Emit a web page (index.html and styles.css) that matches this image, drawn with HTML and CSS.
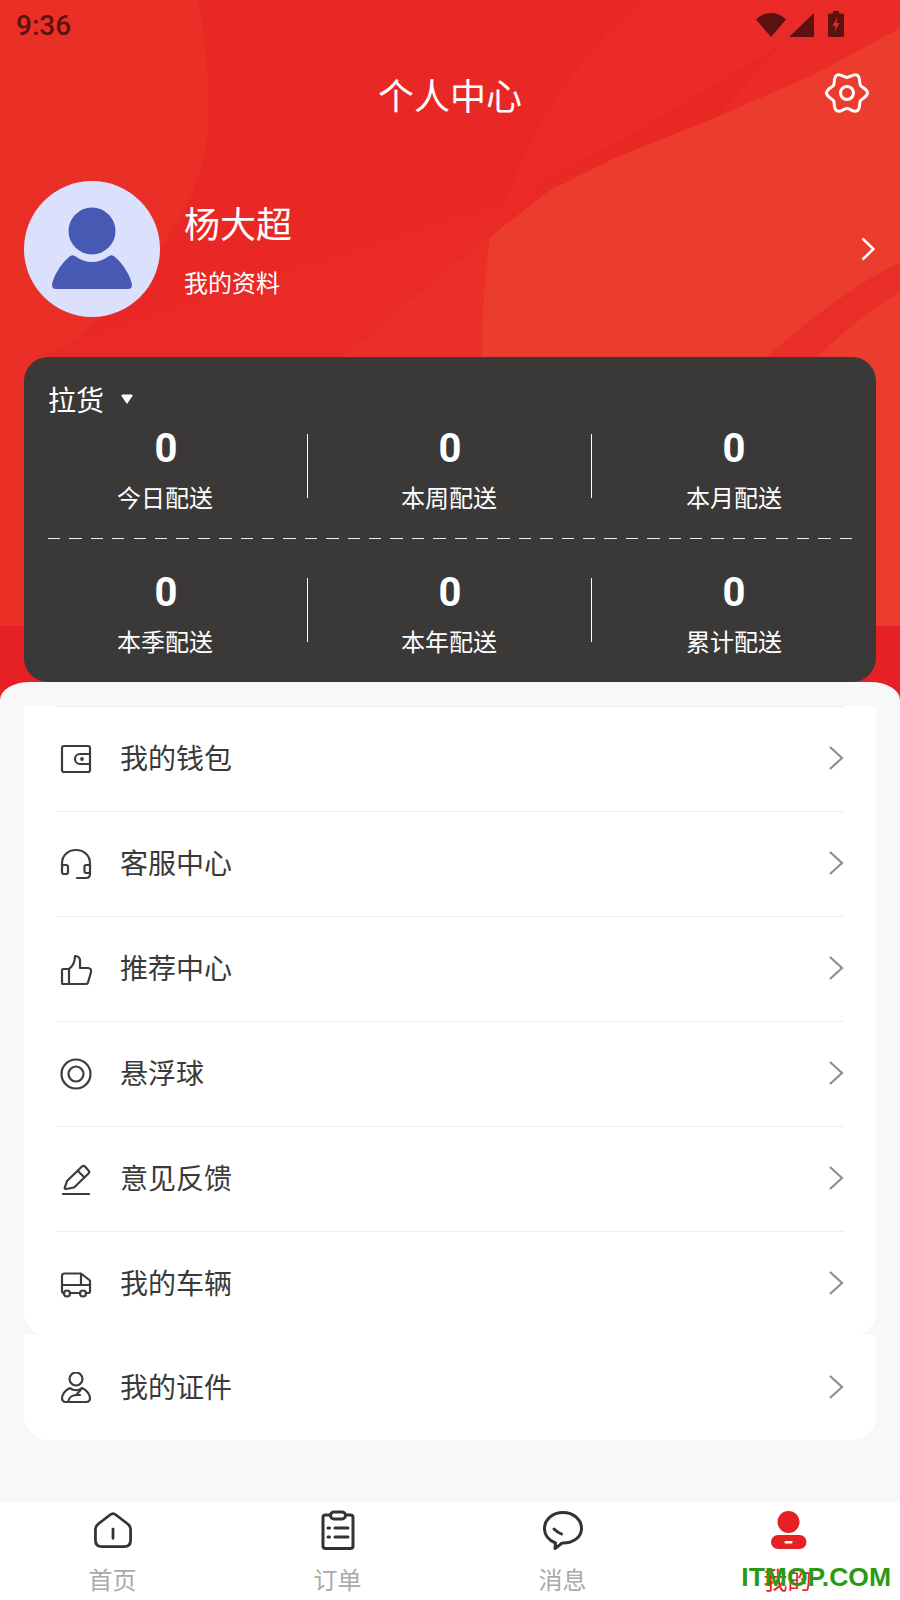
FILE: index.html
```html
<!DOCTYPE html>
<html lang="zh-CN"><head>
<meta charset="utf-8">
<title>个人中心</title>
<link rel="stylesheet" href="styles.css">
</head>
<body>
<div class="page">
    <div class="hero">
        <!-- background artwork of the header -->
        <svg class="hero-bg" viewBox="0 0 900 626">
            <rect width="900" height="626" fill="#e92825"></rect>
            <path d="M0 0H198C212 80 212 130 200 170C180 240 120 300 60 357L30 626H0Z" fill="#ea2f27"></path>
            <path d="M647 0C600 30 560 90 537 130C520 165 505 200 490 237V357H900V0Z" fill="#ea2b27"></path>
            <path d="M783 43L633 133L500 205L490 237L617 157L717 117Z" fill="#e92826"></path>
            <path d="M35 357C150 310 320 260 500 203L617 157V357Z" fill="#ea2a26"></path>
            <path d="M343 357L450 267L490 237V357Z" fill="#ea2e28"></path>
            <path d="M900 28L817 73L717 117L617 157L550 190L490 237C484 280 482 320 482 357V626H900Z" fill="#eb3c2e"></path>
            <path d="M900 262C855 285 810 318 767 357L790 372H805L817 357C845 330 872 308 900 292Z" fill="#e92d28"></path>
        </svg>

        <div class="status-bar">
            <span class="time">9:36</span>
            <div class="status-icons">
                <svg width="30" height="24" viewBox="0 0 30 24"><path d="M0 6.500C4 2.500 9 0 15 0s11 2.500 15 6.500L15 24Z" fill="#5c1210"></path></svg>
                <svg width="25" height="24" viewBox="0 0 25 24"><path d="M25 0V24H0Z" fill="#5c1210"></path></svg>
                <svg width="16" height="26" viewBox="0 0 16 26"><path d="M5 0h6v2.500h3.500a1.500 1.500 0 0 1 1.500 1.500v20.500a1.500 1.500 0 0 1-1.500 1.500h-13A1.500 1.500 0 0 1 0 24.500V4a1.500 1.500 0 0 1 1.500-1.500H5Z" fill="#5c1210"></path><path d="M9.500 6L4.500 15h3L6.500 21l5-9h-3Z" fill="#e92726"></path></svg>
            </div>
        </div>

        <div class="nav">
            <h1 class="nav-title">个人中心</h1>
            <svg class="gear" width="42" height="42" viewBox="0 0 42 42" fill="none" stroke="#fff" stroke-width="3">
                <path d="M41.500 21C41.500 25 35.920 26.150 34.420 28.750C32.920 31.350 34.710 36.750 31.250 38.750C27.790 40.750 24 36.500 21 36.500C18 36.500 14.210 40.750 10.750 38.750C7.290 36.750 9.080 31.350 7.580 28.750C6.080 26.150 0.500 25 0.500 21C0.500 17 6.080 15.850 7.580 13.250C9.080 10.650 7.290 5.250 10.750 3.250C14.210 1.250 18 5.500 21 5.500C24 5.500 27.790 1.250 31.250 3.250C34.710 5.250 32.920 10.650 34.420 13.250C35.920 15.850 41.500 17 41.500 21Z"></path>
                <circle cx="21" cy="21" r="6.500"></circle>
            </svg>
        </div>

        <div class="profile">
            <div class="avatar">
                <svg width="136" height="136" viewBox="0 0 136 136">
                    <circle cx="68" cy="50" r="23.500" fill="#4759b3"></circle>
                    <path d="M44 77Q47 73 51 75Q59 81 68 81Q77 81 85 75Q89 73 92 77C100 84 107 96 108 104Q108 108 104 108H32Q28 108 28 104C29 96 36 84 44 77Z" fill="#4759b3"></path>
                </svg>
            </div>
            <div class="profile-text">
                <div class="profile-name">杨大超</div>
                <div class="profile-sub">我的资料</div>
            </div>
            <svg class="profile-arrow" width="14" height="24" viewBox="0 0 14 24" fill="none" stroke="#fff" stroke-width="2.500"><path d="M1.500 1.500L12.500 12L1.500 22.500"></path></svg>
        </div>

        <div class="stats-card">
            <div class="stats-head">
                <span>拉货</span>
                <svg width="12" height="10" viewBox="0 0 12 10"><path d="M1.500 0.500H10.500Q12 0.500 11.500 2L6 10L0.500 2Q0 0.500 1.500 0.500Z" fill="#fff"></path></svg>
            </div>
            <div class="stats-row">
                <div class="stat"><div class="stat-value">0</div><div class="stat-label">今日配送</div></div>
                <div class="stat"><div class="stat-value">0</div><div class="stat-label">本周配送</div></div>
                <div class="stat"><div class="stat-value">0</div><div class="stat-label">本月配送</div></div>
            </div>
            <div class="stats-dash"></div>
            <div class="stats-row">
                <div class="stat"><div class="stat-value">0</div><div class="stat-label">本季配送</div></div>
                <div class="stat"><div class="stat-value">0</div><div class="stat-label">本年配送</div></div>
                <div class="stat"><div class="stat-value">0</div><div class="stat-label">累计配送</div></div>
            </div>
        </div>
    </div>

    <div class="sheet">
        <div class="menu-card">
            <div class="menu-row">
                <svg class="menu-icon" viewBox="0 0 32 32"><rect x="2" y="3" width="28" height="26" rx="2"></rect><path d="M30 11H20a5 5 0 0 0 0 10H30"></path><circle cx="22" cy="16" r="0.800"></circle></svg>
                <span class="menu-text">我的钱包</span>
                <svg class="menu-arrow" width="16" height="26" viewBox="0 0 16 26"><path d="M2 2L14 13L2 24"></path></svg>
            </div>
            <div class="menu-row">
                <svg class="menu-icon" viewBox="0 0 32 32"><path d="M2 18V15.500C2 7.500 8 2 16 2s14 5.500 14 13.500V18"></path><rect x="2" y="17" width="6" height="9" rx="2"></rect><path d="M30 17H26a1.500 1.500 0 0 0-1.500 1.500v5a1.500 1.500 0 0 0 1.500 1.500h4M30 17V26q0 4-4 4H17"></path></svg>
                <span class="menu-text">客服中心</span>
                <svg class="menu-arrow" width="16" height="26" viewBox="0 0 16 26"><path d="M2 2L14 13L2 24"></path></svg>
            </div>
            <div class="menu-row">
                <svg class="menu-icon" viewBox="0 0 32 32"><path d="M9 16H3a1 1 0 0 0-1 1V30a1 1 0 0 0 1 1H26a2 2 0 0 0 2-1.500L31 19a3 3 0 0 0-3-4H20V8a4.500 4.500 0 0 0-4.500-5L15 3C15 9 13 13 9 16ZM9 16V31"></path></svg>
                <span class="menu-text">推荐中心</span>
                <svg class="menu-arrow" width="16" height="26" viewBox="0 0 16 26"><path d="M2 2L14 13L2 24"></path></svg>
            </div>
            <div class="menu-row">
                <svg class="menu-icon" viewBox="0 0 32 32"><circle cx="16" cy="16" r="14.500"></circle><circle cx="16" cy="16" r="7.500"></circle></svg>
                <span class="menu-text">悬浮球</span>
                <svg class="menu-arrow" width="16" height="26" viewBox="0 0 16 26"><path d="M2 2L14 13L2 24"></path></svg>
            </div>
            <div class="menu-row">
                <svg class="menu-icon" viewBox="0 0 32 32"><path d="M6 26C4.500 26 4.500 25 5 24L7 18L22 3.500Q23.500 2 25 3.500L28.500 7.500Q30 9 28.500 10.500L14 24.500Z"></path><path d="M18 8L24.500 14.500"></path><path d="M3 31H29"></path></svg>
                <span class="menu-text">意见反馈</span>
                <svg class="menu-arrow" width="16" height="26" viewBox="0 0 16 26"><path d="M2 2L14 13L2 24"></path></svg>
            </div>
            <div class="menu-row">
                <svg class="menu-icon" viewBox="0 0 32 32"><path d="M4 25H3.500Q2 25 2 23V8Q2 5.500 4.500 5.500H21L30 12.500V23Q30 25 28.500 25H26.500M20 25H10M21 5.500V17M2 17H30"></path><circle cx="7" cy="25.500" r="3"></circle><circle cx="23" cy="25.500" r="3"></circle></svg>
                <span class="menu-text">我的车辆</span>
                <svg class="menu-arrow" width="16" height="26" viewBox="0 0 16 26"><path d="M2 2L14 13L2 24"></path></svg>
            </div>
        </div>
        <div class="menu-card menu-card-last">
            <div class="menu-row menu-row-plain">
                <svg class="menu-icon" viewBox="0 0 32 32"><circle cx="16" cy="7" r="6.500"></circle><path d="M10 16C5 18 2 23 2 26C2 29 4 30 6 30H26C28 30 30 29 30 26C30 23 27 18 22 16C19 19 13 19 10 16Z"></path><path d="M8 30C9 25 13 23 16 23H20M16 23C18 21 20 19 21 17"></path></svg>
                <span class="menu-text">我的证件</span>
                <svg class="menu-arrow" width="16" height="26" viewBox="0 0 16 26"><path d="M2 2L14 13L2 24"></path></svg>
            </div>
        </div>
    </div>

    <div class="tabbar">
        <div class="tab">
            <svg class="tab-icon" width="40" height="40" viewBox="0 0 40 40"><path d="M17 3.500Q20 1 23 3.500L36 13.500Q39 16 39 19V31Q39 38 32 38H8Q1 38 1 31V19Q1 16 4 13.500ZM20 19V29" transform="translate(1.500 1.500) scale(0.925)"></path></svg>
            <span class="tab-label">首页</span>
        </div>
        <div class="tab">
            <svg class="tab-icon" width="40" height="40" viewBox="0 0 40 40"><path d="M12 5H7.500Q5 5 5 7.500V36Q5 38.500 7.500 38.500H32.500Q35 38.500 35 36V7.500Q35 5 32.500 5H28"></path><rect x="12.500" y="2" width="15" height="7" rx="3.500"></rect><path d="M17 18H30M17 27H30M10 18H11.500M10 27H11.500"></path></svg>
            <span class="tab-label">订单</span>
        </div>
        <div class="tab">
            <svg class="tab-icon" width="40" height="40" viewBox="0 0 40 40"><path d="M12 38.500L12.500 33C6 30.500 1.500 25 1.500 18.500C1.500 9.500 9.500 2.500 20 2.500S38.500 9.500 38.500 18.500S30 33 20 33C18 33 17 35 12 38.500Z"></path><path d="M11 19Q14 22 18.500 24"></path></svg>
            <span class="tab-label">消息</span>
        </div>
        <div class="tab tab-active">
            <svg width="40" height="40" viewBox="0 0 40 40"><circle cx="20.500" cy="12" r="11" fill="#e62125"></circle><rect x="3" y="25" width="35.500" height="14" rx="7" fill="#e62125"></rect><rect x="16.500" y="31" width="8" height="2.500" rx="1" fill="#fff"></rect></svg>
            <span class="tab-label">我的</span>
        </div>
    </div>

    <div class="watermark">ITMOP.COM</div>
</div>
</body>
</html>
```

FILE: styles.css
```css
* {
    box-sizing: border-box;
}

body {
    margin: 0;
    background: #fff;
    font-family: "Noto Sans CJK SC", Roboto, sans-serif;
}

.page {
    position: relative;
    width: 900px;
    height: 1600px;
    display: flex;
    flex-direction: column;
    overflow: hidden;
}

/* header */
.hero {
    position: relative;
    height: 700px;
    flex-shrink: 0;
    background: #e62125;
}

.hero-bg {
    position: absolute;
    top: 0;
    left: 0;
    width: 900px;
    height: 626px;
}

.status-bar,
.nav,
.profile,
.stats-card {
    position: relative;
}

.status-bar {
    height: 50px;
    padding: 0 56px 0 16px;
    display: flex;
    align-items: center;
    justify-content: space-between;
}

.time {
    font-family: Roboto, sans-serif;
    font-size: 28px;
    font-weight: 500;
    color: #5c1210;
}

.status-icons {
    display: flex;
    align-items: center;
    gap: 3px;
}

.status-icons svg:last-child {
    margin-left: 11px;
    margin-top: -2px;
}

.nav {
    height: 94px;
    padding-bottom: 6px;
    display: flex;
    align-items: center;
    justify-content: center;
}

.nav-title {
    margin: 0;
    font-size: 36px;
    font-weight: 400;
    color: #fff;
}

.gear {
    position: absolute;
    right: 32px;
    top: 22px;
    overflow: visible;
}

.profile {
    margin-top: 37px;
    padding: 0 25px 0 24px;
    display: flex;
    align-items: center;
}

.avatar {
    width: 136px;
    height: 136px;
    border-radius: 50%;
    background: #dbe1fc;
}

.avatar svg {
    display: block;
}

.profile-text {
    flex: 1;
    margin-left: 24px;
    padding-bottom: 2px;
    color: #fff;
}

.profile-name {
    font-size: 36px;
    line-height: 50px;
}

.profile-sub {
    margin-top: 18px;
    font-size: 24px;
    line-height: 34px;
}

/* dark statistics card */
.stats-card {
    margin: 40px 24px 0;
    height: 325px;
    padding-top: 28px;
    border-radius: 24px;
    background: #3a3938;
    color: #fff;
}

.stats-head {
    height: 28px;
    padding-left: 24px;
    display: flex;
    align-items: center;
    gap: 17px;
    font-size: 28px;
    margin-bottom: 14px;
}

.stats-row {
    display: grid;
    grid-template-columns: repeat(3, 1fr);
}

.stat {
    position: relative;
    height: 87px;
    padding-right: 2px;
    text-align: center;
}

.stat:last-child {
    padding-right: 0;
}

.stat:not(:last-child) .stat-value {
    margin-left: 2px;
}

.stat:not(:last-child)::after {
    content: "";
    position: absolute;
    top: 7px;
    right: 0;
    width: 1px;
    height: 64px;
    background: #fff;
}

.stat-value {
    font-family: Roboto, sans-serif;
    font-size: 40px;
    font-weight: 700;
    line-height: 44px;
}

.stat-label {
    margin-top: 11px;
    font-size: 24px;
    line-height: 30px;
}

.stats-dash {
    height: 1px;
    margin: 24px 24px 32px;
    background: repeating-linear-gradient(90deg, #eee 0, #eee 12.300px, transparent 12.300px, transparent 21.400px);
}

/* menu */
.sheet {
    flex: 1;
    margin-top: -18px;
    position: relative;
    padding-top: 24px;
    background: #f7f8fa;
    border-radius: 30px 30px 0 0 / 18px 18px 0 0;
}

.menu-card {
    margin: 0 24px;
    background: #fff;
    border-radius: 0 0 24px 24px;
    overflow: hidden;
}

.menu-card-last {
    margin-top: -1px;
}

.menu-row {
    position: relative;
    height: 105px;
    padding: 0 32px 0 36px;
    display: flex;
    align-items: center;
}

.menu-row::before {
    content: "";
    position: absolute;
    top: 0;
    left: 32px;
    right: 32px;
    height: 1px;
    background: #eee;
}

.menu-row-plain::before {
    display: none;
}

.menu-icon {
    width: 32px;
    height: 32px;
    margin-top: 1px;
    fill: none;
    stroke: #3c3c3c;
    stroke-width: 2.200;
    stroke-linejoin: round;
    stroke-linecap: round;
}

.menu-text {
    flex: 1;
    margin-left: 28px;
    margin-bottom: 4px;
    font-size: 28px;
    color: #3a3a3a;
}

.menu-arrow {
    margin-bottom: 2px;
    fill: none;
    stroke: #8f8f8f;
    stroke-width: 2.200;
}

/* bottom tabs */
.tabbar {
    height: 98px;
    flex-shrink: 0;
    padding-top: 8px;
    display: grid;
    grid-template-columns: repeat(4, 1fr);
    background: #fff;
}

.tab {
    display: flex;
    flex-direction: column;
    align-items: center;
}

.tab-icon {
    fill: none;
    stroke: #333;
    stroke-width: 3;
    stroke-linejoin: round;
    stroke-linecap: round;
}

.tab-label {
    margin-top: 13px;
    font-size: 24px;
    line-height: 32px;
    color: #aaa;
}

.tab-active .tab-label {
    color: #e62125;
}

.watermark {
    position: absolute;
    right: 9px;
    bottom: 7px;
    font-family: "Liberation Sans", sans-serif;
    font-size: 26.500px;
    font-weight: 700;
    line-height: 32px;
    color: #2a9a14;
}
```
